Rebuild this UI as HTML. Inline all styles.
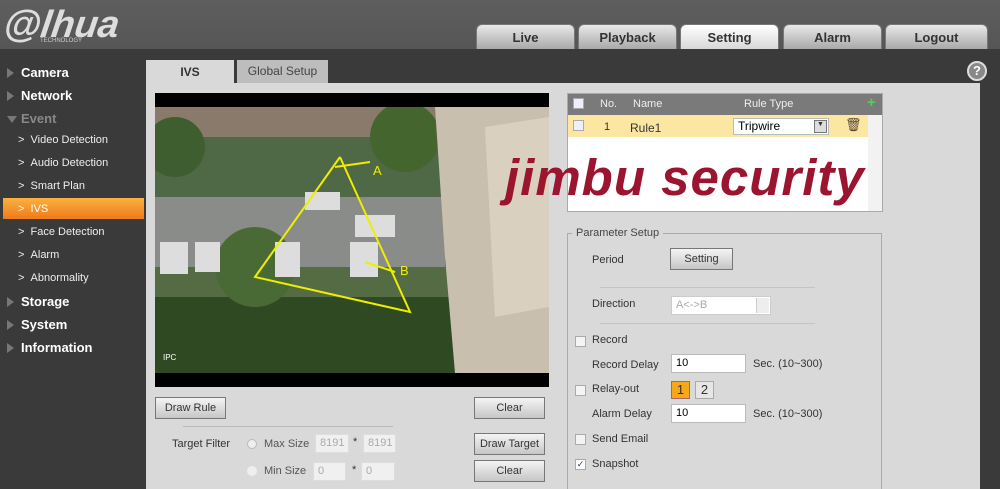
<!DOCTYPE html>
<html><head><meta charset="utf-8"><style>
*{box-sizing:border-box;margin:0;padding:0}
body{width:1000px;height:489px;overflow:hidden;background:#3a3a3a;font-family:"Liberation Sans",sans-serif;font-size:11px;color:#333;position:relative}
.abs{position:absolute}
.hdr{left:0;top:0;width:1000px;height:49px;background:linear-gradient(#5e5e5e,#565656)}
.tab{top:24px;height:25px;width:99px;border-radius:6px 6px 0 0;background:linear-gradient(#e8e8e8,#a9a9a9);text-align:center;line-height:25px;font-weight:bold;font-size:13px;color:#333;border:1px solid #777;border-bottom:none}
.side{color:#fff;font-weight:bold;font-size:13px;left:21px}
.tri{position:absolute;left:-14px;top:3px;width:0;height:0;border-left:7px solid #777;border-top:5px solid transparent;border-bottom:5px solid transparent}
.sub{color:#eee;font-size:11px;left:18px}
.panel{left:146px;top:83px;width:834px;height:406px;background:#d9d9d9}
.btn{height:22px;border:1px solid #777;background:linear-gradient(#f4f4f4,#c6c6c6);text-align:center;line-height:20px;font-size:11px;color:#333}
.inp{height:19px;background:#fff;border:1px solid #bbb;font-size:11px;line-height:17px;padding-left:4px}
.dis{background:#f0f0f0;color:#aaa;border-color:#ddd}
.cb{width:11px;height:11px;border:1px solid #aaa;background:#f4f4f4}
</style></head><body>
<div class="abs hdr"></div>
<div class="abs" style="left:4px;top:4px;font:italic bold 38px 'Liberation Sans',sans-serif;color:#ddd;letter-spacing:0px;transform:skewX(-8deg)">@lhua</div>
<div class="abs" style="left:40px;top:38px;font-size:6px;color:#ccc">TECHNOLOGY</div>
<div class="abs tab" style="left:476px">Live</div>
<div class="abs tab" style="left:578px">Playback</div>
<div class="abs tab" style="left:680px;background:linear-gradient(#fff,#d8d8d8)">Setting</div>
<div class="abs tab" style="left:783px">Alarm</div>
<div class="abs tab" style="left:885px;width:103px">Logout</div>
<div class="abs" style="left:967px;top:61px;width:20px;height:20px;border-radius:50%;background:#888;border:2px solid #ddd;color:#fff;font-weight:bold;font-size:13px;text-align:center;line-height:16px">?</div>

<div class="abs side" style="top:65px"><span class="tri"></span>Camera</div>
<div class="abs side" style="top:88px"><span class="tri"></span>Network</div>
<div class="abs side" style="top:111px;color:#888"><span class="tri" style="border-left:5px solid transparent;border-right:5px solid transparent;border-top:7px solid #777;border-bottom:none;top:5px"></span>Event</div>
<div class="abs sub" style="top:134px">&gt; &nbsp;Video Detection</div>
<div class="abs sub" style="top:157px">&gt; &nbsp;Audio Detection</div>
<div class="abs sub" style="top:180px">&gt; &nbsp;Smart Plan</div>
<div class="abs" style="left:3px;top:198px;width:141px;height:21px;background:linear-gradient(#fbb040,#f07a1a)"></div>
<div class="abs sub" style="top:203px;color:#fff">&gt; &nbsp;IVS</div>
<div class="abs sub" style="top:226px">&gt; &nbsp;Face Detection</div>
<div class="abs sub" style="top:249px">&gt; &nbsp;Alarm</div>
<div class="abs sub" style="top:272px">&gt; &nbsp;Abnormality</div>
<div class="abs side" style="top:294px"><span class="tri"></span>Storage</div>
<div class="abs side" style="top:317px"><span class="tri"></span>System</div>
<div class="abs side" style="top:340px"><span class="tri"></span>Information</div>

<div class="abs" style="left:146px;top:60px;width:88px;height:24px;background:#d9d9d9;text-align:center;line-height:24px;font-weight:bold;font-size:12px">IVS</div>
<div class="abs" style="left:237px;top:60px;width:91px;height:23px;background:#bdbdbd;text-align:center;line-height:23px;font-size:12px;color:#444">Global Setup</div>
<div class="abs panel"></div>

<div class="abs" style="left:155px;top:93px;width:394px;height:294px;background:#000"></div>
<svg class="abs" style="left:155px;top:107px" width="394" height="266">
<rect width="394" height="266" fill="#4f6846"/>
<rect x="0" y="0" width="300" height="30" fill="#8a7a6c"/>
<circle cx="20" cy="40" r="30" fill="#3f5e30"/><circle cx="250" cy="30" r="35" fill="#45652f"/>
<rect x="0" y="90" width="290" height="70" fill="#8a8c8a"/>
<rect x="0" y="160" width="300" height="30" fill="#556b44"/>
<rect x="0" y="190" width="394" height="76" fill="#2f4a22"/>
<polygon points="280,0 394,0 394,266 300,266 290,150" fill="#c8bfae"/>
<polygon points="330,20 394,10 394,200 340,210" fill="#d9d0c0"/>
<circle cx="100" cy="160" r="40" fill="#4a6a35"/>
<g fill="#ddd"><rect x="150" y="85" width="35" height="18"/><rect x="200" y="108" width="40" height="22"/><rect x="5" y="135" width="28" height="32"/><rect x="40" y="135" width="25" height="30"/><rect x="120" y="135" width="25" height="35"/><rect x="195" y="135" width="28" height="35"/></g>
<g stroke="#ee0" stroke-width="2" fill="none"><polyline points="185,50 100,170 255,205 185,50"/><line x1="180" y1="60" x2="215" y2="55"/><line x1="210" y1="155" x2="240" y2="165"/></g>
<text x="218" y="68" fill="#ee0" font-size="13" font-family="Liberation Sans">A</text>
<text x="245" y="168" fill="#ee0" font-size="13" font-family="Liberation Sans">B</text>
<text x="8" y="253" fill="#fff" font-size="8" font-family="Liberation Sans">IPC</text>
</svg>

<div class="abs btn" style="left:155px;top:397px;width:71px">Draw Rule</div>
<div class="abs btn" style="left:474px;top:397px;width:71px">Clear</div>
<div class="abs" style="left:183px;top:426px;width:210px;height:1px;background:#bbb"></div>
<div class="abs" style="left:172px;top:438px">Target Filter</div>
<div class="abs" style="left:247px;top:439px;width:10px;height:10px;border-radius:50%;border:1px solid #bbb;background:#eee"></div>
<div class="abs" style="left:264px;top:438px;color:#555">Max Size</div>
<div class="abs inp dis" style="left:315px;top:434px;width:34px">8191</div>
<div class="abs" style="left:353px;top:436px">*</div>
<div class="abs inp dis" style="left:363px;top:434px;width:33px">8191</div>
<div class="abs" style="left:247px;top:466px;width:10px;height:10px;border-radius:50%;background:#eee"></div>
<div class="abs" style="left:264px;top:465px;color:#555">Min Size</div>
<div class="abs inp dis" style="left:313px;top:462px;width:33px">0</div>
<div class="abs" style="left:352px;top:464px">*</div>
<div class="abs inp dis" style="left:361px;top:462px;width:34px">0</div>
<div class="abs btn" style="left:474px;top:433px;width:71px">Draw Target</div>
<div class="abs btn" style="left:474px;top:460px;width:71px">Clear</div>

<div class="abs" style="left:567px;top:93px;width:316px;height:119px;background:#fff;border:1px solid #aaa"></div>
<div class="abs" style="left:568px;top:94px;width:314px;height:21px;background:#7a7a7a;color:#eee;font-size:11px">
<span class="abs cb" style="left:5px;top:4px;background:#eef"></span>
<span class="abs" style="left:32px;top:4px">No.</span><span class="abs" style="left:65px;top:4px">Name</span><span class="abs" style="left:176px;top:4px">Rule Type</span>
<span class="abs" style="left:299px;top:0px;color:#5c5;font-weight:bold;font-size:15px">+</span></div>
<div class="abs" style="left:568px;top:115px;width:300px;height:22px;background:#fbe6a2"></div>
<div class="abs cb" style="left:573px;top:120px;background:#eef"></div>
<div class="abs" style="left:604px;top:121px">1</div>
<div class="abs" style="left:630px;top:121px;font-size:12px">Rule1</div>
<div class="abs inp" style="left:733px;top:118px;width:96px;height:17px;line-height:15px;font-size:12px;color:#000">Tripwire</div>
<div class="abs" style="left:814px;top:120px;width:13px;height:13px;background:#ddd;border:1px solid #777;font-size:7px;text-align:center">▼</div>
<div class="abs" style="left:845px;top:117px;font-size:13px;color:#543">🗑</div>
<div class="abs" style="left:868px;top:115px;width:14px;height:96px;background:#f2f2f2"></div>
<div class="abs" style="left:505px;top:148px;font:italic bold 51px 'Liberation Sans',sans-serif;color:#9b1430;letter-spacing:1px;white-space:nowrap">jimbu security</div>

<div class="abs" style="left:567px;top:233px;width:315px;height:256px;border:1px solid #aaa;border-bottom:none"></div>
<div class="abs" style="left:572px;top:227px;background:#d9d9d9;padding:0 4px;color:#444">Parameter Setup</div>
<div class="abs" style="left:592px;top:254px">Period</div>
<div class="abs btn" style="left:670px;top:248px;width:63px">Setting</div>
<div class="abs" style="left:600px;top:287px;width:215px;height:1px;background:#c4c4c4"></div>
<div class="abs" style="left:592px;top:298px">Direction</div>
<div class="abs inp" style="left:671px;top:296px;width:100px;color:#aaa;border-color:#ccc">A&lt;-&gt;B</div>
<div class="abs" style="left:756px;top:298px;width:13px;height:15px;background:#eee;border-left:1px solid #ccc"></div>
<div class="abs" style="left:600px;top:323px;width:215px;height:1px;background:#c4c4c4"></div>
<div class="abs cb" style="left:575px;top:336px"></div><div class="abs" style="left:592px;top:334px">Record</div>
<div class="abs" style="left:592px;top:359px">Record Delay</div>
<div class="abs inp" style="left:671px;top:354px;width:75px;color:#000">10</div>
<div class="abs" style="left:753px;top:358px">Sec. (10~300)</div>
<div class="abs cb" style="left:575px;top:385px"></div><div class="abs" style="left:592px;top:383px">Relay-out</div>
<div class="abs" style="left:671px;top:381px;width:19px;height:18px;background:#f6a818;border:1px solid #a66;text-align:center;line-height:16px;font-size:13px">1</div>
<div class="abs" style="left:695px;top:381px;width:19px;height:18px;background:#e6e6e6;border:1px solid #aaa;text-align:center;line-height:16px;font-size:13px">2</div>
<div class="abs" style="left:592px;top:408px">Alarm Delay</div>
<div class="abs inp" style="left:671px;top:404px;width:75px;color:#000">10</div>
<div class="abs" style="left:753px;top:408px">Sec. (10~300)</div>
<div class="abs cb" style="left:575px;top:434px"></div><div class="abs" style="left:592px;top:433px">Send Email</div>
<div class="abs cb" style="left:575px;top:459px;background:#fff;font-size:9px;line-height:9px;text-align:center;color:#246">✓</div><div class="abs" style="left:592px;top:458px">Snapshot</div>
</body></html>
